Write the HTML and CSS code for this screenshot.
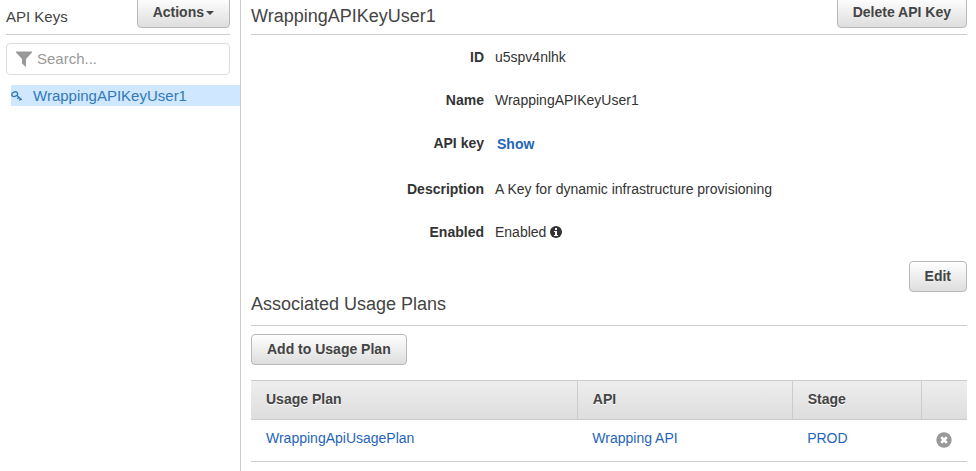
FILE: index.html
```html
<!DOCTYPE html>
<html lang="en">
<head>
<meta charset="utf-8">
<title>API Keys</title>
<link rel="stylesheet" href="styles.css">
</head>
<body>
<div class="layout">
  <aside class="sidebar">
    <header class="bar">
      <h1 class="sidebar-title">API Keys</h1>
      <button class="btn" type="button">Actions<span class="caret"></span></button>
    </header>
    <label class="search">
      <svg class="filter-icon" viewBox="0 0 16 16" aria-hidden="true"><path d="M0 0.500H16V1.500L10 8V16L6 12.500V8L0 1.500Z"/></svg>
      <input type="text" placeholder="Search..." aria-label="Search API keys">
    </label>
    <nav>
      <a class="key-item" href="#">
        <svg class="key-icon" viewBox="0 0 12 12" aria-hidden="true"><ellipse cx="3.700" cy="4.200" rx="3" ry="2.200" transform="rotate(-25 3.700 4.200)"/><path d="M5.600 5.300L10.800 9.700M7.600 7.100L6.400 8.800M9.600 8.800L8.400 10.500"/></svg>
        <span>WrappingAPIKeyUser1</span>
      </a>
    </nav>
  </aside>
  <main class="content">
    <header class="bar">
      <h2 class="title">WrappingAPIKeyUser1</h2>
      <button class="btn" type="button">Delete API Key</button>
    </header>
    <dl class="details">
      <dt>ID</dt><dd>u5spv4nlhk</dd>
      <dt>Name</dt><dd>WrappingAPIKeyUser1</dd>
      <dt>API key</dt><dd class="show-cell"><button class="show" type="button">Show</button></dd>
      <dt>Description</dt><dd>A Key for dynamic infrastructure provisioning</dd>
      <dt>Enabled</dt>
      <dd>Enabled
        <svg class="info-icon" viewBox="0 0 12 12" role="img" aria-label="Information"><circle cx="6" cy="6" r="6"/><path d="M5 2H7V4H5ZM4 5H7V9H8V10H4V9H5V6H4Z"/></svg>
      </dd>
    </dl>
    <div class="actions"><button class="btn" type="button">Edit</button></div>
    <h2 class="title section-title">Associated Usage Plans</h2>
    <button class="btn" type="button">Add to Usage Plan</button>
    <table class="plans">
      <colgroup><col class="col-plan"><col class="col-api"><col class="col-stage"><col class="col-remove"></colgroup>
      <thead>
        <tr><th scope="col">Usage Plan</th><th scope="col">API</th><th scope="col">Stage</th><th></th></tr>
      </thead>
      <tbody>
        <tr>
          <td><a href="#">WrappingApiUsagePlan</a></td>
          <td><a href="#">Wrapping API</a></td>
          <td><a href="#">PROD</a></td>
          <td><button class="remove" type="button" aria-label="Remove"><svg viewBox="0 0 16 16" aria-hidden="true"><circle cx="8" cy="8" r="7.700"/><path d="M5.200 5.200L10.800 10.800M10.800 5.200L5.200 10.800"/></svg></button></td>
        </tr>
      </tbody>
    </table>
  </main>
</div>
</body>
</html>
```
FILE: styles.css
```css
* { box-sizing: border-box; }

body {
  margin: 0;
  background: #fff;
  color: #333;
  font: 14px/20px "Liberation Sans", Arial, sans-serif;
}

a { color: #1f64b8; text-decoration: none; }
h1, h2 { margin: 0; font-weight: normal; color: #444; }
button, input { font: inherit; }

.layout { display: flex; min-height: 100vh; }

.sidebar {
  flex: 0 0 241px;
  min-width: 0;
  padding-left: 6px;
  border-right: 1px solid #ccc;
}

.content { flex: 1; min-width: 0; padding: 0 9px 0 10px; }

.bar {
  display: flex;
  justify-content: space-between;
  align-items: center;
  padding-bottom: 6px;
  border-bottom: 1px solid #ccc;
}

.sidebar .bar { margin-right: 10px; }
.bar .btn { margin-top: -3px; }
.sidebar-title { font-size: 15px; line-height: 20px; padding-top: 6px; }
.title { font-size: 18px; line-height: 24px; padding-top: 4px; }

.btn {
  height: 31px;
  padding: 0 15px 2px;
  border: 1px solid #b8b8b8;
  border-radius: 4px;
  background: linear-gradient(#fff, #ddd);
  color: #444;
  font-weight: bold;
  white-space: nowrap;
}

.caret {
  display: inline-block;
  margin-left: 2px;
  border: 4px solid transparent;
  border-top-color: #444;
  border-bottom: 0;
  vertical-align: middle;
}

.search {
  display: flex;
  align-items: center;
  gap: 5px;
  height: 32px;
  margin: 8px 10px 0 0;
  padding: 0 9px;
  border: 1px solid #ddd;
  border-radius: 4px;
}

.filter-icon { flex: none; width: 16px; height: 16px; fill: #999; }

.search input {
  flex: 1;
  width: 100%;
  min-width: 0;
  padding: 0;
  border: 0;
  outline: 0;
  background: none;
  font-size: 15px;
}

.search input::placeholder { color: #999; }

.key-item {
  display: flex;
  align-items: center;
  gap: 10px;
  height: 21px;
  margin: 10px 0 0 5px;
  background: #cfe7ff;
  color: #337ab7;
  font-size: 15px;
}

.key-icon { flex: none; width: 12px; height: 12px; fill: none; stroke: #337ab7; stroke-width: 1.4; }

.details {
  display: grid;
  grid-template-columns: 233px 1fr;
  column-gap: 11px;
  row-gap: 23px;
  margin: 12px 0 0;
}

.details dt { font-weight: bold; text-align: right; }
.details dd { margin: 0; }
.show-cell { height: 23px; padding-left: 2px; }

.show {
  padding: 0;
  border: 0;
  background: none;
  color: #1f64b8;
  font-weight: bold;
  line-height: 22px;
}

.info-icon { width: 12px; height: 12px; vertical-align: -1px; fill: #333; }
.info-icon path { fill: #fff; }

.actions { display: flex; justify-content: flex-end; margin-top: 19px; }

.section-title {
  margin-bottom: 8px;
  padding: 0 0 9px;
  border-bottom: 1px solid #ccc;
}

.plans {
  width: 100%;
  margin-top: 15px;
  border-collapse: collapse;
  table-layout: fixed;
}

.col-api { width: 30%; }
.col-stage { width: 18%; }
.col-remove { width: 46px; }

.plans th, .plans td {
  padding: 0 15px;
  border-bottom: 1px solid #ccc;
  text-align: left;
}

.plans thead tr { background: linear-gradient(#eee, #ddd); }

.plans th {
  height: 39px;
  padding-bottom: 2px;
  border-top: 1px solid #ccc;
  color: #444;
  text-shadow: 0 1px 0 #fff;
}

.plans th + th { border-left: 1px solid #ccc; }
.plans td { height: 42px; padding-bottom: 6px; }
.plans td:last-child { padding-bottom: 2px; }

.remove { display: block; padding: 0; border: 0; background: none; }
.remove svg { display: block; width: 16px; height: 16px; fill: #999; }
.remove path { stroke: #fff; stroke-width: 2.6; }
```
